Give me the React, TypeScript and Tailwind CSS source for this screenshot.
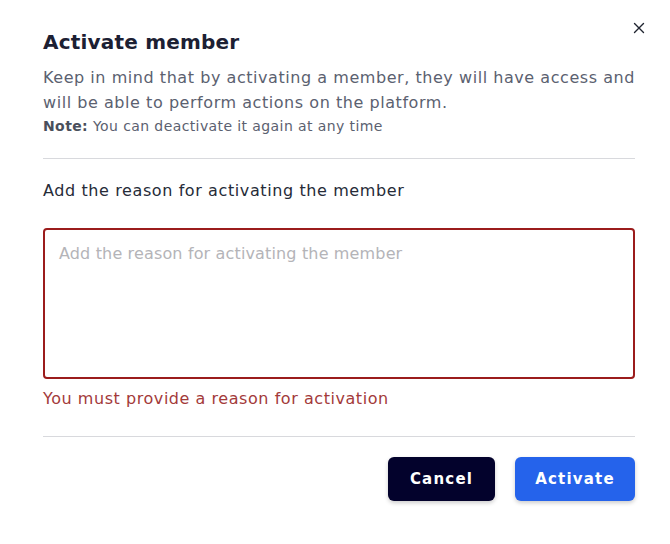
export default function App() {
  return (
    <div className="min-h-screen w-full bg-white" style={{ fontFamily: '"DejaVu Sans", "Open Sans", sans-serif' }}>
      <div className="relative w-[670px] pl-[43px] pr-[35px] pt-[28px] pb-[40px]">
        {/* Close */}
        <button className="absolute right-[23px] top-[20px] text-[#1f2430]">
          <svg width="16" height="16" viewBox="0 0 16 16" fill="none" stroke="currentColor" strokeWidth="1.4" strokeLinecap="round">
            <path d="M3.5 3.5l9 9M12.5 3.5l-9 9" />
          </svg>
        </button>

        <h2 className="text-[20px] font-semibold leading-[28px] tracking-[0.2px] text-[#1c2033]">Activate member</h2>
        <p className="mt-[9px] text-[16px] leading-[25px] tracking-[0.55px] text-[#5b6170]">
          Keep in mind that by activating a member, they will have access and will be able to perform actions on the platform.
        </p>
        <p className="text-[14px] leading-[22px] tracking-[0.4px] text-[#5b6170]">
          <span className="font-bold text-[#4a4f5c]">Note:</span> You can deactivate it again at any time
        </p>

        <div className="mt-[21px] h-px w-full bg-[#d8d9dd]" />

        <label className="mt-[20px] block text-[16px] font-medium leading-[24px] tracking-[0.6px] text-[#262b38]">
          Add the reason for activating the member
        </label>

        <textarea
          autoFocus
          placeholder="Add the reason for activating the member"
          className="mt-[25px] block h-[151px] w-full resize-none rounded-[4px] border-2 border-[#9b1c1c] px-[14px] py-[12px] text-[16px] leading-[24px] tracking-[0.15px] text-[#262b38] caret-[#111] outline-none placeholder:text-[#b4b4b8]"
        />

        <p className="mt-[8px] text-[16px] leading-[24px] tracking-[0.55px] text-[#a33a3a]">You must provide a reason for activation</p>

        <div className="mt-[25px] h-px w-full bg-[#d8d9dd]" />

        <div className="mt-[20px] flex justify-end gap-[20px]">
          <button className="h-[44px] w-[107px] rounded-[6px] bg-[#03022c] text-[15px] font-bold tracking-[0.08em] text-white shadow-[0_2px_4px_rgba(0,0,0,0.2)]">
            Cancel
          </button>
          <button className="h-[44px] w-[120px] rounded-[6px] bg-[#2563eb] text-[15px] font-bold tracking-[0.08em] text-white shadow-[0_2px_4px_rgba(0,0,0,0.2)]">
            Activate
          </button>
        </div>
      </div>
    </div>
  );
}
